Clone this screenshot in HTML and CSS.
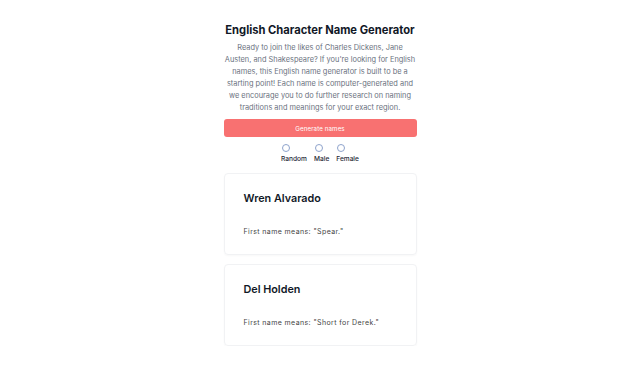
FILE: index.html
```html
<!DOCTYPE html>
<html>
<head>
<meta charset="utf-8">
<link rel="stylesheet" href="styles.css">
</head>
<body>
<main class="wrap">
  <h1 class="title">English Character Name Generator</h1>
  <p class="intro">Ready to join the likes of Charles Dickens, Jane Austen, and Shakespeare? If you're looking for English names, this English name generator is built to be a starting point! Each name is computer-generated and we encourage you to do further research on naming traditions and meanings for your exact region.</p>
  <button class="btn">Generate names</button>
  <div class="options">
    <label class="opt"><span class="radio"></span><span>Random</span></label>
    <label class="opt"><span class="radio"></span><span>Male</span></label>
    <label class="opt"><span class="radio"></span><span>Female</span></label>
  </div>
  <section class="card">
    <h2 class="name">Wren Alvarado</h2>
    <p class="meaning">First name means: "Spear."</p>
  </section>
  <section class="card">
    <h2 class="name">Del Holden</h2>
    <p class="meaning">First name means: "Short for Derek."</p>
  </section>
</main>
</body>
</html>
```
FILE: styles.css
```css
html, body {
  margin: 0;
  padding: 0;
  background: #ffffff;
}
body {
  font-family: Inter, "Noto Sans", sans-serif;
  color: #111827;
}
.wrap {
  width: 193px;
  margin: 0 auto;
  padding-top: 21px;
  display: flex;
  flex-direction: column;
}
.title {
  margin: 0;
  font-size: 11.2px;
  line-height: 18px;
  font-weight: 700;
  text-align: center;
  white-space: nowrap;
  color: #111827;
}
.intro {
  margin: 3px 0 0;
  font-size: 7.4px;
  line-height: 12px;
  text-align: center;
  color: #6b7280;
}
.btn {
  margin-top: 5px;
  height: 18px;
  border: 0;
  border-radius: 3px;
  background: #f87171;
  color: #fff;
  font-family: inherit;
  font-size: 6.2px;
  letter-spacing: 0.1px;
  padding: 0;
}
.options {
  display: flex;
  justify-content: center;
  gap: 7px;
  margin-top: 7px;
}
.opt {
  display: flex;
  flex-direction: column;
  align-items: flex-start;
  gap: 3px;
  font-size: 6.6px;
  font-weight: 500;
  line-height: 8px;
  color: #1f2937;
}
.radio {
  width: 6px;
  height: 6px;
  border: 1px solid #8ea3cc;
  border-radius: 50%;
  margin-left: 1px;
}
.card {
  height: 82px;
  box-sizing: border-box;
  border: 1px solid #f1f2f4;
  border-radius: 4px;
  box-shadow: 0 1px 2px rgba(0,0,0,0.03);
  padding: 17px 19px 0;
}
.card:first-of-type {
  margin-top: 10px;
}
.card + .card {
  margin-top: 9px;
}
.name {
  margin: 0;
  font-size: 10.8px;
  line-height: 16px;
  font-weight: 600;
  color: #111827;
}
.meaning {
  margin: 20px 0 0;
  font-size: 7px;
  letter-spacing: 0.4px;
  line-height: 10px;
  color: #444444;
}
```
